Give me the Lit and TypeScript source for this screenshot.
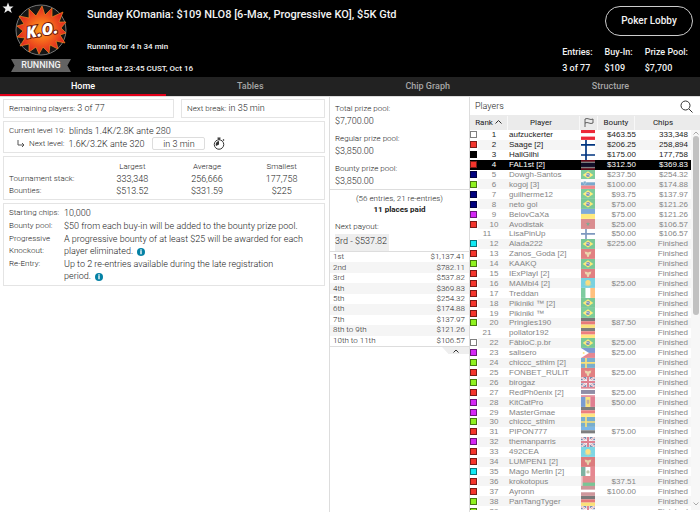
import { LitElement, html, css, svg } from "lit";
import { customElement } from "lit/decorators.js";

type Player = [string, string, string, string, string];

const MARKS: Record<string, string> = {
  w: "#ffffff", r: "#f4352c", k: "#000000", b: "#00007f", g: "#8ff21f", m: "#d428f5", c: "#10eaf4",
};

// mark, name, flag, bounty, chips
const PLAYERS: Player[] = [
  ["w", "aufzuckerter", "at", "$463.55", "333,348"],
  ["r", "Saage [2]", "fi", "$206.25", "258,894"],
  ["k", "HallGilhi", "fi", "$175.00", "177,758"],
  ["r", "FAL1st [2]", "th", "$312.50", "$369.83"],
  ["b", "Dowgh-Santos", "br", "$237.50", "$254.32"],
  ["g", "kogoj [3]", "si", "$100.00", "$174.88"],
  ["b", "guilherme12", "br", "$93.75", "$137.97"],
  ["b", "neto gol", "br", "$75.00", "$121.26"],
  ["m", "BelovCaXa", "ua", "$75.00", "$121.26"],
  ["r", "Avodistak", "ma", "$25.00", "$106.57"],
  ["", "LisaPinUp", "fi", "$50.00", "$106.57"],
  ["c", "Alada222", "br", "$225.00", "Finished"],
  ["r", "Zanos_Goda [2]", "me", "", "Finished"],
  ["g", "KAAKQ", "br", "", "Finished"],
  ["r", "IExPlayI [2]", "me", "", "Finished"],
  ["r", "MAMbI4 [2]", "kz", "$25.00", "Finished"],
  ["r", "Treddan", "ie", "", "Finished"],
  ["r", "Pikiniki ™ [2]", "br", "", "Finished"],
  ["r", "Pikiniki ™", "br", "", "Finished"],
  ["g", "Pringles190", "de", "$87.50", "Finished"],
  ["", "pollator192", "de", "", "Finished"],
  ["w", "FâbioC.p.br", "br", "$25.00", "Finished"],
  ["m", "salisero", "ph", "$25.00", "Finished"],
  ["g", "chiccc_sthlm [2]", "se", "", "Finished"],
  ["r", "FONBET_RULIT", "me", "$25.00", "Finished"],
  ["g", "birogaz", "gb", "", "Finished"],
  ["r", "RedPh0enix [2]", "th", "$25.00", "Finished"],
  ["m", "KitCatPro", "md", "$50.00", "Finished"],
  ["m", "MasterGmae", "de", "", "Finished"],
  ["g", "chiccc_sthlm", "se", "", "Finished"],
  ["r", "PIPON777", "ee", "$75.00", "Finished"],
  ["m", "themanparris", "gb", "", "Finished"],
  ["r", "492CEA", "kz", "", "Finished"],
  ["r", "LUMPEN1 [2]", "me", "", "Finished"],
  ["c", "Mago Merlin [2]", "mx", "", "Finished"],
  ["r", "krokotopus", "by", "$37.51", "Finished"],
  ["r", "Ayronn", "lv", "$100.00", "Finished"],
  ["g", "PanTangTyger", "de", "", "Finished"],
  ["g", "", "gb", "", "Finished"],
];

const PAYOUTS = [
  ["1st", "$1,137.41"], ["2nd", "$782.11"], ["3rd", "$537.82"], ["4th", "$369.83"], ["5th", "$254.32"],
  ["6th", "$174.88"], ["7th", "$137.97"], ["8th to 9th", "$121.26"], ["10th to 11th", "$106.57"],
];

const rows = (...c: string[]) =>
  c.map((f, i) => svg`<rect x="0" y=${(i * 30) / c.length} width="42" height=${30 / c.length} fill=${f} />`);
const cols = (...c: string[]) =>
  c.map((f, i) => svg`<rect x=${(i * 42) / c.length} y="0" width=${42 / c.length} height="30" fill=${f} />`);
const cross = (bg: string, fg: string) => svg`
  <rect width="42" height="30" fill=${bg} /><path d="M0 15H42M15 0V30" stroke=${fg} stroke-width="5" />`;

const FLAGS: Record<string, unknown> = {
  at: rows("#ed2939", "#ffffff", "#ed2939"),
  fi: cross("#ffffff", "#003580"),
  th: svg`<rect width="42" height="30" fill="#c8102e" /><rect y="5" width="42" height="20" fill="#fff" /><rect y="9" width="42" height="12" fill="#241d4f" />`,
  br: svg`<rect width="42" height="30" fill="#009b3a" /><path d="M5 15L21 4L37 15L21 26Z" fill="#fedf00" /><circle cx="21" cy="15" r="6" fill="#002776" /><path d="M15 13Q21 12 27 17" stroke="#fff" stroke-width="1.5" fill="none" />`,
  si: svg`${rows("#ffffff", "#005da4", "#ed1c24")}<path d="M8 7H15V12Q15 15 11.500 17Q8 15 8 12Z" fill="#005da4" stroke="#fff" />`,
  ua: rows("#0057b7", "#ffd700"),
  ma: svg`<rect width="42" height="30" fill="#c1272d" /><path d="M21 8L25 21L14 13H28L17 21Z" fill="#006233" />`,
  me: svg`<rect width="42" height="30" fill="#c40308" /><path d="M11 7L15 9L18 8L21 11L24 8L27 9L31 7L29 16L25 17L24 23L21 25L18 23L17 17L13 16Z" fill="#d9b25f" />`,
  kz: svg`<rect width="42" height="30" fill="#00afca" /><circle cx="21" cy="14" r="8" fill="#fec50c" /><path d="M11 20Q21 28 31 20" stroke="#fec50c" stroke-width="2" fill="none" />`,
  ie: cols("#009a44", "#ffffff", "#ff8200"),
  de: rows("#000000", "#dd0000", "#ffce00"),
  ph: svg`${rows("#0038a8", "#ce1126")}<path d="M0 0L24 15L0 30Z" fill="#fff" /><circle cx="8" cy="15" r="3" fill="#fcd116" />`,
  se: cross("#006aa7", "#fecc00"),
  gb: svg`<rect width="42" height="30" fill="#012169" /><path d="M0 0L42 30M42 0L0 30" stroke="#fff" stroke-width="6" /><path d="M0 0L42 30M42 0L0 30" stroke="#c8102e" stroke-width="2" /><path d="M21 0V30M0 15H42" stroke="#fff" stroke-width="10" /><path d="M21 0V30M0 15H42" stroke="#c8102e" stroke-width="6" />`,
  md: svg`${cols("#0046ae", "#ffd200", "#cc092f")}<path d="M17 8H25V18L21 23L17 18Z" fill="#9c6b3c" />`,
  ee: rows("#0072ce", "#000000", "#ffffff"),
  mx: svg`${cols("#006847", "#ffffff", "#ce1126")}<circle cx="21" cy="15" r="5" fill="#8c9157" />`,
  by: svg`<rect width="42" height="30" fill="#d22730" /><rect y="20" width="42" height="10" fill="#00973a" /><rect width="5" height="30" fill="#e9a9ad" />`,
  lv: svg`<rect width="42" height="30" fill="#9e3039" /><rect y="11" width="42" height="8" fill="#fff" />`,
};

const info = html`<button class="info" aria-label="More information">
  <svg viewBox="0 0 18 18"><circle cx="9" cy="9" r="9" fill="#0481a5" /><path d="M9 3V6M9 7V14" stroke="#fff" stroke-width="3" /></svg>
</button>`;

@customElement("app-root")
export class AppRoot extends LitElement {
  static styles = css`
    :host { display: flex; flex-direction: column; height: 100vh; overflow: hidden; background: #fff; color: #222; font: 300 9px/12px Roboto, sans-serif; }
    * { box-sizing: border-box; }
    button { margin: 0; padding: 0; border: 0; background: none; color: inherit; font: inherit; }
    h1, h2, p, dl, dd, dt { margin: 0; font: inherit; }
    svg { display: block; }
    table { border-collapse: collapse; }
    th, td { padding: 0; font-weight: inherit; text-align: left; }

    .top { display: flex; flex: none; height: 77px; background: #000; color: #f2f2f2; font-weight: 500; font-size: 8px; }
    .star { align-self: flex-start; margin: 2px 0 0 2px; }
    .star svg { width: 12px; height: 12px; }
    .brand { display: flex; flex-direction: column; align-items: center; gap: 3px; width: 60px; margin: 4px 0 0 -3px; }
    .logo { width: 52px; height: 52px; }
    .logo text { font: italic 800 16px "Open Sans", sans-serif; }
    .ribbon { width: 60px; height: 13px; background: #636363; clip-path: polygon(0 0, 100% 0, 94% 50%, 100% 100%, 0 100%, 6% 50%); font: 500 9px/13px Roboto, sans-serif; text-align: center; }
    .heading { display: flex; flex-direction: column; flex: 1; margin-left: 16px; padding-top: 8px; }
    .title { font-size: 11px; line-height: 14px; margin-bottom: 19px; }
    .since { margin-bottom: 10px; }
    .side { display: flex; flex-direction: column; align-items: flex-end; padding: 6px 7px 0 0; }
    .lobby { width: 88px; height: 30px; border: 1px solid #ccc; border-radius: 15px; font-size: 10px; }
    .facts { display: flex; gap: 12px; margin: 10px 5px 0 0; font-size: 9px; line-height: 12px; }
    .facts dd { margin-top: 4px; }

    .tabs { display: flex; flex: none; height: 19px; background: #222; color: #a6a6a6; }
    .tab { flex: 1 1 auto; border-bottom: 2px solid transparent; font-weight: 500; font-size: 9px; }
    .tab.on { color: #fff; border-color: #e2001a; }

    .body { display: grid; grid-template-columns: 47fr 20fr 33fr; flex: 1; min-height: 0; border-top: 1px solid #ddd; }
    .home { display: flex; flex-direction: column; gap: 3px; padding: 2px 4px 0 3px; }
    .panel { border: 1px solid #e4e4e4; padding: 2px 5px; }
    .pair { display: grid; grid-template-columns: 171fr 144fr; gap: 7px; }
    .pair .panel { height: 19px; }
    .lbl { font-size: 8px; }
    .line { display: flex; align-items: center; gap: 4px; height: 13px; }
    .next { padding-left: 8px; }
    .turn { width: 8px; height: 8px; }
    .chip { width: 53px; height: 13px; margin-left: 4px; border: 1px solid #ddd; border-radius: 2px; }
    .clock { width: 12px; height: 13px; margin-left: 4px; }
    .stats { width: 100%; table-layout: fixed; }
    .stats th, .stats td { height: 12px; text-align: center; }
    .stats th { font-size: 8px; }
    .stats th:first-child { width: 86px; text-align: left; }
    .stats-panel { padding-top: 4px; }
    .about { display: grid; grid-template-columns: 51px 1fr; gap: 1px 4px; padding: 3px 5px; }
    .about dt { font-size: 8px; white-space: nowrap; }
    .info { vertical-align: middle; margin-left: 2px; }
    .info svg { width: 8px; height: 8px; }

    .prizes { border-left: 1px solid #ddd; }
    .pools { display: grid; gap: 6px; padding: 6px 5px 2px; border-bottom: 1px solid #ddd; }
    .pools dt { font-size: 8px; }
    .paid { padding: 3px 5px 0; }
    .paid p { text-align: center; line-height: 11px; }
    .paid .small { font-size: 8px; }
    .paid .bold { font-size: 8px; font-weight: 700; }
    .paid h2 { margin: 6px 0 1px; font-size: 8px; }
    .paid .now { width: 54px; height: 17px; background: #eee; white-space: nowrap; line-height: 14px; }
    .payouts { display: block; height: 96px; border-top: 1px solid #ddd; border-bottom: 1px solid #ddd; }
    .payouts tbody { display: grid; grid-auto-rows: 1fr; height: 94px; }
    .payouts tr { display: flex; justify-content: space-between; align-items: center; padding: 0 4px 0 3px; line-height: 10px; font-size: 8px; }
    .payouts tr:nth-child(even) { background: #f5f5f5; }
    .fold { display: block; margin-left: auto; width: 27px; height: 7px; background: #eee; clip-path: polygon(0 0, 100% 0, 100% 100%, 24% 100%); }
    .fold svg { width: 6px; height: 4px; margin: 0 auto; }

    .players { display: flex; flex-direction: column; min-height: 0; min-width: 0; padding-bottom: 2px; border-left: 1px solid #ddd; font: 400 8px/9px "Liberation Sans", Arial, sans-serif; }
    .bar { display: flex; flex: none; justify-content: space-between; align-items: center; height: 18px; padding: 0 7px 0 5px; font: 300 9px/12px Roboto, sans-serif; }
    .find svg { width: 13px; height: 13px; }
    .list { display: grid; grid-template-columns: 1fr 9px; grid-template-rows: 15px 1fr; flex: 1; min-height: 0; }
    .grid { display: block; grid-column: 1; grid-row: 1 / 3; min-height: 0; overflow: hidden; }
    .grid tr { display: grid; grid-template-columns: 8px 28px 75px 14px 41px 1fr; align-items: center; }
    .list::before { content: ""; grid-column: 2; grid-row: 1; background: #ebebeb; }
    .grid thead, .grid tbody { min-width: 0; }
    .grid thead { display: block; }
    .grid thead tr { height: 15px; background: #ebebeb; font: 400 8px/14px Roboto, sans-serif; grid-template-columns: 37px 72px 18px 37px 1fr; }
    .grid thead th { text-align: center; }
    .grid thead th + th { border-left: 1px solid #f8f8f8; }
    .grid thead th:nth-child(2) { padding-right: 5px; }
    .grid thead svg { display: inline-block; vertical-align: middle; }
    .sort { width: 7px; height: 4px; }
    .pole { width: 10px; height: 9px; }
    .grid tbody { display: grid; grid-auto-rows: 1fr; height: 386px; color: #858585; }
    .grid tbody tr { min-height: 0; }
    .grid tbody tr:nth-child(even) { background: #f5f5f5; }
    .grid tbody tr.live { color: #222; }
    .box { display: flex; align-items: center; align-self: stretch; background: #fff; }
    .grid tbody tr.me { background: #000; color: #fff; }
    .me .box { background: #000; }
    .mark { width: 7px; height: 7px; border: 1px solid rgb(0 0 0 / 50%); }
    .rank { padding-left: 4px; text-align: center; }
    .rank.wide { grid-column: 1 / 3; padding: 0 2px 0 0; }
    .name { padding-left: 3px; white-space: nowrap; }
    .flag { align-self: stretch; position: relative; opacity: 0.5; }
    .live .flag { opacity: 1; }
    .flag svg { position: absolute; width: 100%; height: 100%; }
    .num { text-align: right; }
    .chips { padding-right: 3px; }
    .scroll { grid-column: 2; grid-row: 2; display: grid; grid-template-rows: 6px 180fr 184fr 12px; justify-items: center; align-items: center; background: #f7f7f7; }
    .thumb { width: 6px; height: 100%; border-radius: 3px; background: #c1c1c1; }
    .scroll svg { width: 6px; height: 4px; }
    .scroll .down { grid-row: 4; }
  `;

  private row([mark, name, flag, bounty, chips]: Player, i: number) {
    const kind = i === 3 ? "me" : i < 3 ? "live" : "";
    return html`<tr class=${kind}>
      ${mark ? html`<td class="box"><div class="mark" style="background:${MARKS[mark]}"></div></td>` : ""}
      <td class=${mark ? "rank" : "rank wide"}>${i + 1}</td>
      <td class="name">${name}</td>
      <td class="flag"><svg viewBox="0 0 42 30" preserveAspectRatio="none">${FLAGS[flag]}</svg></td>
      <td class="num">${bounty}</td>
      <td class="num chips">${chips}</td>
    </tr>`;
  }

  render() {
    return html`
      <header class="top">
        <button class="star" aria-label="Favourite">
          <svg viewBox="0 0 24 24"><path d="M12 1L15 9H23L17 14L19.500 22L12 17L4.500 22L7 14L1 9H9Z" fill="#eee" /></svg>
        </button>
        <div class="brand">
          <svg class="logo" viewBox="0 0 52 52">
            <defs><radialGradient id="blast"><stop offset="0" stop-color="#ffa51f" /><stop offset="0.5" stop-color="#f4641c" /><stop offset="1" stop-color="#df2520" /></radialGradient></defs>
            <circle cx="26" cy="26" r="25" fill="#151515" stroke="#777" />
            <path d="M27 2L30 11L37 4L37 13L48 8L44 18L51 18L46 24L51 29L45 31L50 39L41 37L43 45L35 41L34 49L28 43L24 50L21 43L14 48L14 40L5 42L10 34L2 33L8 27L2 22L9 20L4 12L14 14L14 5L21 12Z" fill="url(#blast)" stroke="#f58a1f" stroke-width="0.7" />
            <g transform="rotate(-10 26 26)"><text x="27" y="32" text-anchor="middle" fill="#fff" stroke="#6d1508" stroke-width="2" paint-order="stroke">K.O.</text></g>
          </svg>
          <div class="ribbon">RUNNING</div>
        </div>
        <div class="heading">
          <h1 class="title">Sunday KOmania: $109 NLO8 [6-Max, Progressive KO], $5K Gtd</h1>
          <p class="since">Running for 4 h 34 min</p>
          <p>Started at 23:45 CUST, Oct 16</p>
        </div>
        <div class="side">
          <button class="lobby">Poker Lobby</button>
          <dl class="facts">
            <div><dt>Entries:</dt><dd>3 of 77</dd></div>
            <div><dt>Buy-In:</dt><dd>$109</dd></div>
            <div><dt>Prize Pool:</dt><dd>$7,700</dd></div>
          </dl>
        </div>
      </header>
      <nav class="tabs">
        <button class="tab on">Home</button><button class="tab">Tables</button><button class="tab">Chip Graph</button><button class="tab">Structure</button>
      </nav>
      <main class="body">
        <section class="home">
          <div class="pair">
            <div class="panel"><span class="lbl">Remaining players:</span> 3 of 77</div>
            <div class="panel"><span class="lbl">Next break:</span> in 35 min</div>
          </div>
          <div class="panel">
            <div class="line"><span class="lbl">Current level 19:</span><span>blinds 1.4K/2.8K ante 280</span></div>
            <div class="line next">
              <svg class="turn" viewBox="0 0 16 16"><path d="M2 0V10H14M10 6L14 10L10 14" fill="none" stroke="#555" stroke-width="2" /></svg>
              <span class="lbl">Next level:</span><span>1.6K/3.2K ante 320</span>
              <button class="chip">in 3 min</button>
              <svg class="clock" viewBox="0 0 24 26"><circle cx="12" cy="15" r="9.500" fill="none" stroke="#333" stroke-width="2" /><path d="M9 2H15M12 2V6M20 5L22 7" stroke="#333" stroke-width="2.500" /><path d="M12 15V8A7 7 0 0 0 6 18Z" fill="#333" /></svg>
            </div>
          </div>
          <div class="panel stats-panel">
            <table class="stats">
              <tr><th></th><th>Largest</th><th>Average</th><th>Smallest</th></tr>
              <tr><th>Tournament stack:</th><td>333,348</td><td>256,666</td><td>177,758</td></tr>
              <tr><th>Bounties:</th><td>$513.52</td><td>$331.59</td><td>$225</td></tr>
            </table>
          </div>
          <dl class="panel about">
            <dt>Starting chips:</dt><dd>10,000</dd>
            <dt>Bounty pool:</dt><dd>$50 from each buy-in will be added to the bounty prize pool.</dd>
            <dt>Progressive<br />Knockout:</dt><dd>A progressive bounty of at least $25 will be awarded for each player eliminated. ${info}</dd>
            <dt>Re-Entry:</dt><dd>Up to 2 re-entries available during the late registration<br />period. ${info}</dd>
          </dl>
        </section>
        <section class="prizes">
          <dl class="pools">
            <div><dt>Total prize pool:</dt><dd>$7,700.00</dd></div>
            <div><dt>Regular prize pool:</dt><dd>$3,850.00</dd></div>
            <div><dt>Bounty prize pool:</dt><dd>$3,850.00</dd></div>
          </dl>
          <div class="paid">
            <p class="small">(56 entries, 21 re-entries)</p>
            <p class="bold">11 places paid</p>
            <h2>Next payout:</h2>
            <div class="now">3rd - $537.82</div>
          </div>
          <table class="payouts"><tbody>
            ${PAYOUTS.map(([place, sum]) => html`<tr><td>${place}</td><td>${sum}</td></tr>`)}
          </tbody></table>
          <button class="fold" aria-label="Collapse"><svg viewBox="0 0 12 8"><path d="M1 7L6 2L11 7" fill="none" stroke="#333" stroke-width="2" /></svg></button>
        </section>
        <section class="players">
          <div class="bar">
            <h2>Players</h2>
            <button class="find" aria-label="Search players"><svg viewBox="0 0 26 26"><circle cx="11" cy="11" r="9" fill="none" stroke="#333" stroke-width="2" /><path d="M18 18L25 25" stroke="#333" stroke-width="2" /></svg></button>
          </div>
          <div class="list">
            <table class="grid">
              <thead><tr>
                <th>Rank <svg class="sort" viewBox="0 0 14 8"><path d="M1 7L7 1L13 7" fill="none" stroke="#333" stroke-width="2" /></svg></th>
                <th>Player</th>
                <th aria-label="Country"><svg class="pole" viewBox="0 0 20 18"><path d="M2 18V2Q6 0 10 2T18 2V10Q14 12 10 10T2 10" fill="none" stroke="#333" stroke-width="1.500" /></svg></th>
                <th>Bounty</th>
                <th>Chips</th>
              </tr></thead>
              <tbody>${PLAYERS.map((p, i) => this.row(p, i))}</tbody>
            </table>
            <div class="scroll" aria-hidden="true">
              <svg viewBox="0 0 12 8"><path d="M1 7L6 2L11 7" fill="none" stroke="#aaa" stroke-width="2" /></svg>
              <div class="thumb"></div>
              <svg class="down" viewBox="0 0 12 8"><path d="M1 1L6 6L11 1" fill="none" stroke="#aaa" stroke-width="2" /></svg>
            </div>
          </div>
        </section>
      </main>
    `;
  }
}
